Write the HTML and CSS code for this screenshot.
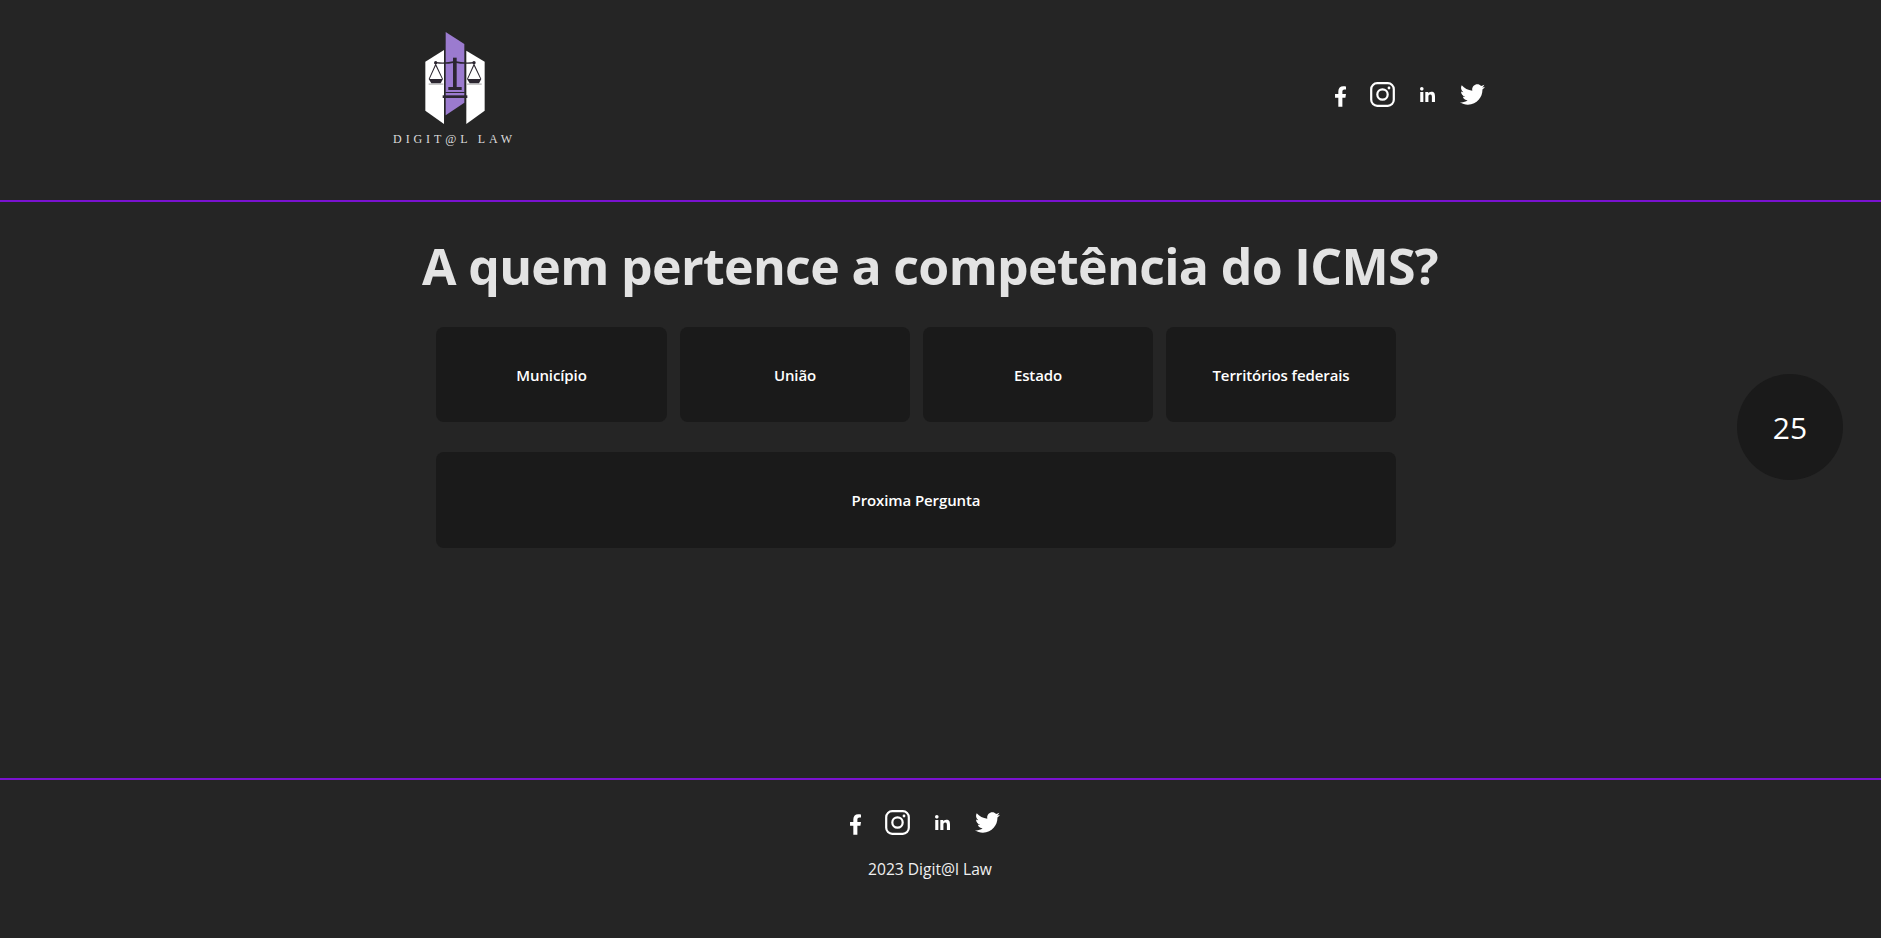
FILE: index.html
```html
<html>
    <head>
        <title>Digit@l Law</title>
        <meta name="viewport" content="width=device-width, initial-scale=1">
        <link rel="stylesheet" href="styles.css">
    </head>
    <body>
        <svg class="icon-defs" width="0" height="0">
            <symbol id="icon-facebook" viewBox="22 0 272 512">
                <path fill="#fff" d="M279.14 288l14.22-92.66h-88.91v-60.13c0-25.35 12.42-50.06 52.24-50.06h40.42V6.26S260.43 0 225.36 0c-73.22 0-121.08 44.38-121.08 124.72v70.62H22.89V288h81.39v224h100.17V288z"/>
            </symbol>
            <symbol id="icon-instagram" viewBox="0 0 25 25">
                <rect x="1.2" y="1.2" width="22.6" height="22.6" rx="6" fill="none" stroke="#fff" stroke-width="2.2"/>
                <circle cx="12.5" cy="12.5" r="5.2" fill="none" stroke="#fff" stroke-width="2.2"/>
                <circle cx="19" cy="6" r="1.4" fill="#fff"/>
            </symbol>
            <symbol id="icon-linkedin" viewBox="0 0 448 448">
                <path fill="#fff" d="M100.28 448H7.4V148.9h92.88zM53.79 108.1C24.09 108.1 0 83.5 0 53.8a53.79 53.79 0 0 1 107.58 0c0 29.7-24.1 54.3-53.79 54.3zM447.9 448h-92.68V302.4c0-34.7-.7-79.2-48.29-79.2-48.29 0-55.69 37.7-55.69 76.7V448h-92.78V148.9h89.08v40.8h1.3c12.4-23.5 42.69-48.3 87.88-48.3 94 0 111.28 61.9 111.28 142.3V448z"/>
            </symbol>
            <symbol id="icon-twitter" viewBox="0 48 512 416">
                <path fill="#fff" d="M459.37 151.716c.325 4.548.325 9.097.325 13.645 0 138.72-105.583 298.558-298.558 298.558-59.452 0-114.68-17.219-161.137-47.106 8.447.974 16.568 1.299 25.34 1.299 49.055 0 94.213-16.568 130.274-44.832-46.132-.975-84.792-31.188-98.112-72.772 6.498.974 12.995 1.624 19.818 1.624 9.421 0 18.843-1.3 27.614-3.573-48.081-9.747-84.143-51.98-84.143-102.985v-1.299c13.969 7.797 30.214 12.67 47.431 13.319-28.264-18.843-46.781-51.005-46.781-87.391 0-19.492 5.197-37.36 14.294-52.954 51.655 63.675 129.3 105.258 216.365 109.807-1.624-7.797-2.599-15.918-2.599-24.04 0-57.828 46.782-104.934 104.934-104.934 30.213 0 57.502 12.67 76.67 33.137 23.715-4.548 46.456-13.32 66.599-25.34-7.798 24.366-24.366 44.833-46.132 57.827 21.117-2.273 41.584-8.122 60.426-16.243-14.292 20.791-32.161 39.308-52.628 54.253z"/>
            </symbol>
        </svg>

        <header class="site-header">
            <a class="logo" href="#">
                <svg class="logo-mark" viewBox="165 60 180 285" width="60" height="95">
                    <polygon fill="#fff" points="222,120 166,155 166,302 222,342"/>
                    <polygon fill="#fff" points="289,122 344,155 344,302 289,342"/>
                    <polygon fill="#9b7bcf" points="227,66 283,102 283,278 227,316"/>
                    <rect x="176" y="220" width="44" height="5" fill="#c8c8c8"/>
                    <rect x="291" y="220" width="44" height="5" fill="#c8c8c8"/>
                    <g fill="#2b2630">
                        <rect x="249" y="143" width="11" height="88"/>
                        <rect x="235" y="231" width="40" height="9"/>
                        <rect x="218" y="256" width="74" height="8"/>
                        <rect x="226" y="246" width="58" height="3"/>
                        <circle cx="197" cy="158" r="5"/>
                        <circle cx="312" cy="158" r="5"/>
                        <path d="M197 156 Q225 160 254 153 Q284 160 312 156 V160 Q284 164 254 158 Q225 164 197 160 Z"/>
                        <path d="M176 207 H219 L212 220 H184 Z"/>
                        <path d="M291 207 H334 L327 220 H299 Z"/>
                        <path d="M197 160 L176 207 H179 L197 168 L216 207 H219 Z"/>
                        <path d="M312 160 L291 207 H294 L312 168 L331 207 H334 Z"/>
                    </g>
                </svg>
                <span class="logo-text">DIGIT@L LAW</span>
            </a>
            <nav class="social social-header">
                <a href="#"><svg class="icon-f"><use href="#icon-facebook"/></svg></a>
                <a href="#"><svg class="icon-ig"><use href="#icon-instagram"/></svg></a>
                <a href="#"><svg class="icon-in"><use href="#icon-linkedin"/></svg></a>
                <a href="#"><svg class="icon-tw"><use href="#icon-twitter"/></svg></a>
            </nav>
        </header>

        <main class="quiz">
            <h1 class="question">A quem pertence a competência do ICMS?</h1>
            <div class="answers">
                <button class="btn">Município</button>
                <button class="btn">União</button>
                <button class="btn">Estado</button>
                <button class="btn">Territórios federais</button>
            </div>
            <button class="btn btn-next">Proxima Pergunta</button>
            <div class="timer">25</div>
        </main>

        <footer class="site-footer">
            <nav class="social social-footer">
                <a href="#"><svg class="icon-f"><use href="#icon-facebook"/></svg></a>
                <a href="#"><svg class="icon-ig"><use href="#icon-instagram"/></svg></a>
                <a href="#"><svg class="icon-in"><use href="#icon-linkedin"/></svg></a>
                <a href="#"><svg class="icon-tw"><use href="#icon-twitter"/></svg></a>
            </nav>
            <p class="copyright">2023 Digit@l Law</p>
        </footer>
    </body>
</html>
```

FILE: styles.css
```css
body {
    background: #252525;
    font-family: "Open Sans", "Noto Sans", sans-serif;
    margin: 0;
    padding: 0;
    color: #fff;
    height: 938px;
    overflow: hidden;
}

.icon-defs {
    display: block;
    height: 0;
}

/* header */
.site-header {
    display: flex;
    justify-content: space-between;
    align-items: flex-start;
    height: 200px;
    padding: 0 396px 0 394px;
    border-bottom: 2px solid #7a12d0;
}

.logo {
    display: flex;
    flex-direction: column;
    align-items: center;
    width: 121px;
    margin-top: 30px;
    text-decoration: none;
}

.logo-mark {
    display: block;
}

.logo-text {
    margin-top: 7px;
    font-family: "Liberation Serif", serif;
    font-size: 12px;
    line-height: 14px;
    letter-spacing: 3.9px;
    color: #dcdcdc;
    white-space: nowrap;
}

.social {
    display: flex;
    align-items: center;
    gap: 24px;
}

.social a {
    display: flex;
}

.social-header {
    margin-top: 82px;
}

.social-footer {
    margin-right: 11px;
}

.icon-f {
    width: 11px;
    height: 21px;
    margin-top: 3px;
}

.icon-ig {
    width: 25px;
    height: 25px;
}

.icon-in {
    width: 17px;
    height: 15px;
}

.icon-tw {
    width: 25px;
    height: 21px;
}

/* quiz */
.quiz {
    position: relative;
    height: 576px;
    padding-left: 421px;
}

.question {
    width: 1018px;
    margin: 0;
    padding-top: 30px;
    font-size: 50px;
    line-height: 68px;
    font-weight: 700;
    letter-spacing: -0.65px;
    text-align: center;
    color: #e3e3e3;
    white-space: nowrap;
}

.answers {
    display: grid;
    grid-template-columns: 231px repeat(3, 1fr);
    gap: 13px;
    width: 960px;
    margin: 27px 0 0 15px;
}

.btn {
    height: 95px;
    border: none;
    border-radius: 8px;
    background: #1a1a1a;
    color: #fff;
    font-family: inherit;
    font-size: 15px;
    font-weight: 600;
    letter-spacing: -0.1px;
}

.btn-next {
    display: block;
    width: 960px;
    height: 96px;
    margin: 30px 0 0 15px;
}

.timer {
    position: absolute;
    top: 172px;
    right: 38px;
    display: flex;
    justify-content: center;
    align-items: center;
    width: 106px;
    height: 106px;
    border-radius: 50%;
    background: #1a1a1a;
    font-size: 30px;
}

/* footer */
.site-footer {
    display: flex;
    flex-direction: column;
    align-items: center;
    border-top: 2px solid #7a12d0;
    padding: 30px 21px 0 0;
}

.copyright {
    margin: 24px 0 0;
    font-size: 15.6px;
    line-height: 20px;
    color: #f0f0f0;
}
```
